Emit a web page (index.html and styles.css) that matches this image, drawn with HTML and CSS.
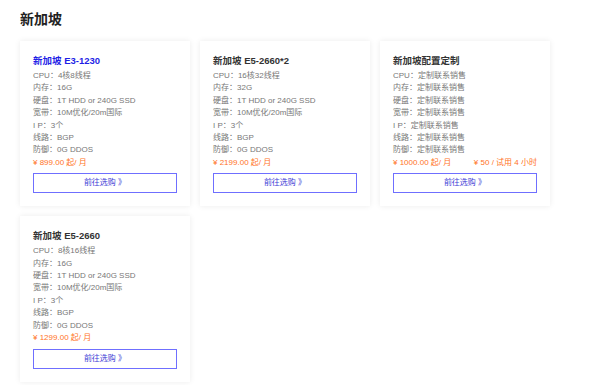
FILE: index.html
```html
<!DOCTYPE html>
<html lang="zh-CN">
<head>
  <meta charset="UTF-8" />
  <meta name="viewport" content="width=device-width, initial-scale=1.0" />
  <title>新加坡</title>
  <link rel="stylesheet" href="styles.css">
</head>
<body>
  <div class="page">
    <h1 class="region-title">新加坡</h1>
    <div class="plans">
      <div class="plan">
        <h2 class="plan-name active">新加坡 E3-1230</h2>
        <ul class="specs">
          <li>CPU：4核8线程</li>
          <li>内存：16G</li>
          <li>硬盘：1T HDD or 240G SSD</li>
          <li>宽带：10M优化/20m国际</li>
          <li>I P：3个</li>
          <li>线路：BGP</li>
          <li>防御：0G DDOS</li>
        </ul>
        <div class="price"><span>¥ 899.00 起/ 月</span></div>
        <a class="buy" href="#">前往选购 》</a>
      </div>
      <div class="plan">
        <h2 class="plan-name">新加坡 E5-2660*2</h2>
        <ul class="specs">
          <li>CPU：16核32线程</li>
          <li>内存：32G</li>
          <li>硬盘：1T HDD or 240G SSD</li>
          <li>宽带：10M优化/20m国际</li>
          <li>I P：3个</li>
          <li>线路：BGP</li>
          <li>防御：0G DDOS</li>
        </ul>
        <div class="price"><span>¥ 2199.00 起/ 月</span></div>
        <a class="buy" href="#">前往选购 》</a>
      </div>
      <div class="plan">
        <h2 class="plan-name">新加坡配置定制</h2>
        <ul class="specs">
          <li>CPU：定制联系销售</li>
          <li>内存：定制联系销售</li>
          <li>硬盘：定制联系销售</li>
          <li>宽带：定制联系销售</li>
          <li>I P：定制联系销售</li>
          <li>线路：定制联系销售</li>
          <li>防御：定制联系销售</li>
        </ul>
        <div class="price"><span>¥ 1000.00 起/ 月</span><span>¥ 50 / 试用 4 小时</span></div>
        <a class="buy" href="#">前往选购 》</a>
      </div>
      <div class="plan">
        <h2 class="plan-name">新加坡 E5-2660</h2>
        <ul class="specs">
          <li>CPU：8核16线程</li>
          <li>内存：16G</li>
          <li>硬盘：1T HDD or 240G SSD</li>
          <li>宽带：10M优化/20m国际</li>
          <li>I P：3个</li>
          <li>线路：BGP</li>
          <li>防御：0G DDOS</li>
        </ul>
        <div class="price"><span>¥ 1299.00 起/ 月</span></div>
        <a class="buy" href="#">前往选购 》</a>
      </div>
    </div>
  </div>
</body>
</html>
```

FILE: styles.css
```css
* { box-sizing: border-box; margin: 0; padding: 0; }
html, body { background: #fff; font-family: 'Liberation Sans', 'Noto Sans CJK SC', sans-serif; color: #777; }
.page { padding: 10px 20px; }
.region-title { font-size: 14px; line-height: 18px; font-weight: 700; color: #222; margin-bottom: 13px; }
.plans { display: grid; grid-template-columns: repeat(3, 170px); gap: 10px; }
.plan { background: #fff; padding: 13px 13px 13px; box-shadow: 0 0 6px rgba(0, 0, 0, 0.08); }
.plan-name { font-size: 9.5px; line-height: 14px; font-weight: 700; color: #333; margin-bottom: 2px; }
.plan-name.active { color: #1f1fe6; }
.specs { list-style: none; }
.specs li, .price { font-size: 8px; line-height: 12.4px; }
.price { display: flex; justify-content: space-between; color: #ff7326; }
.buy { display: block; margin-top: 4px; height: 20px; line-height: 18px; border: 1px solid #6f6fff; text-align: center; font-size: 8px; color: #3d3dd6; text-decoration: none; }
```
